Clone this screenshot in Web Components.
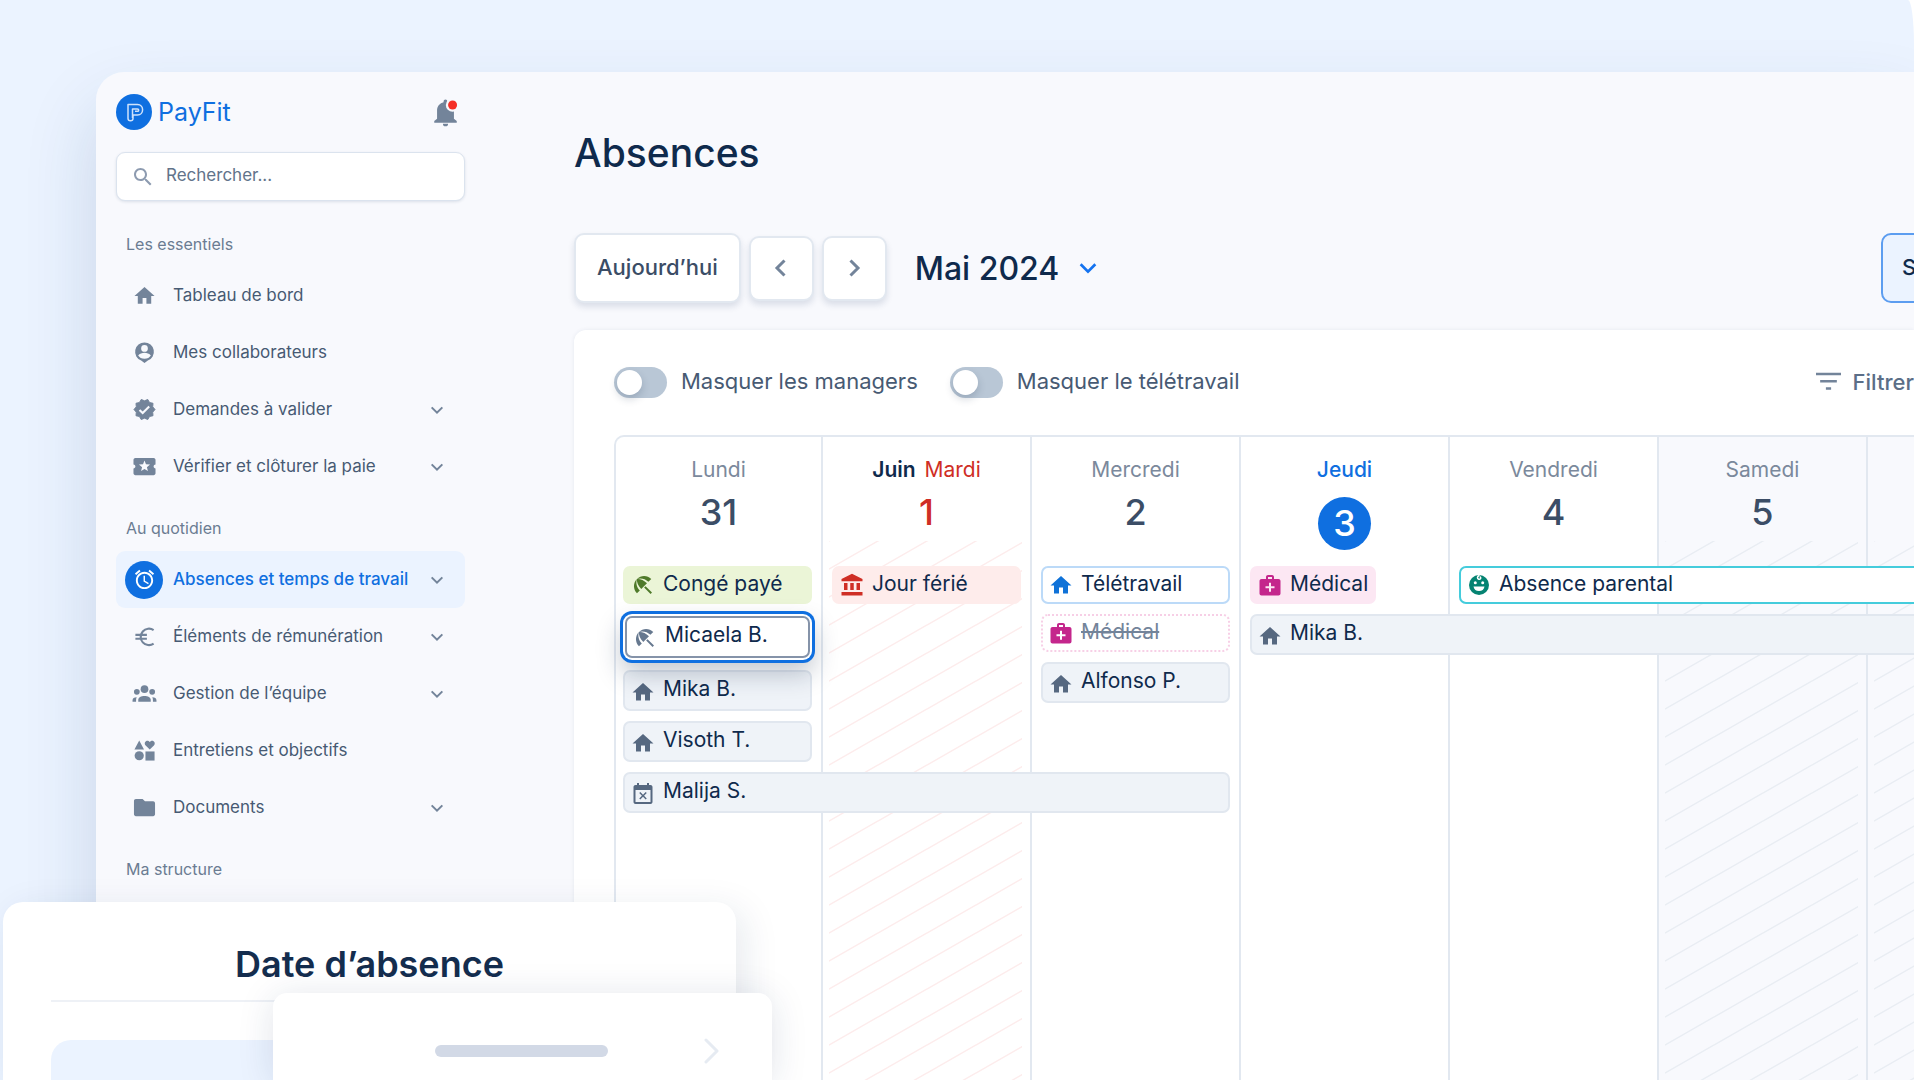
<!DOCTYPE html>
<html lang="fr">
<head>
<meta charset="utf-8">
<meta name="viewport" content="width=device-width, initial-scale=1">
<title>PayFit - Absences</title>
<style>
  :root {
    --blue: #0f6fe0;
    --blue-light: #ebf3ff;
    --navy: #0f2a4c;
    --slate: #3b4d66;
    --text: #475a73;
    --muted: #73849a;
    --line: #e2e8f0;
    --surface: #f8f9fd;
  }

  body {
    margin: 0;
    background: white;
    color: var(--navy);
    font-family: Inter, "Liberation Sans", sans-serif;
  }
</style>
</head>
<body>

<payfit-page>
  <side-bar slot="sidebar">
    <nav-section heading="Les essentiels">
      <nav-item icon="home">Tableau de bord</nav-item>
      <nav-item icon="person">Mes collaborateurs</nav-item>
      <nav-item icon="verified" expandable>Demandes à valider</nav-item>
      <nav-item icon="ticket" expandable>Vérifier et clôturer la paie</nav-item>
    </nav-section>
    <nav-section heading="Au quotidien">
      <nav-item icon="alarm" expandable active>Absences et temps de travail</nav-item>
      <nav-item icon="euro" expandable>Éléments de rémunération</nav-item>
      <nav-item icon="groups" expandable>Gestion de l’équipe</nav-item>
      <nav-item icon="shapes">Entretiens et objectifs</nav-item>
      <nav-item icon="folder" expandable>Documents</nav-item>
    </nav-section>
    <nav-section heading="Ma structure"></nav-section>
  </side-bar>

  <absence-view slot="main">
    <week-calendar>
      <week-day name="Lundi" number="31">
        <day-event kind="leave" icon="umbrella">Congé payé</day-event>
        <day-event kind="selected" icon="umbrella">Micaela B.</day-event>
        <day-event kind="person" icon="home">Mika B.</day-event>
        <day-event kind="person" icon="home">Visoth T.</day-event>
        <day-event kind="person" icon="busy" style="--span: 3">Malija S.</day-event>
      </week-day>
      <week-day name="Mardi" number="1" month="Juin" holiday striped>
        <day-event kind="holiday" icon="bank">Jour férié</day-event>
      </week-day>
      <week-day name="Mercredi" number="2">
        <day-event kind="remote" icon="home">Télétravail</day-event>
        <day-event kind="cancelled" icon="medical">Médical</day-event>
        <day-event kind="person" icon="home">Alfonso P.</day-event>
      </week-day>
      <week-day name="Jeudi" number="3" today>
        <day-event kind="medical" icon="medical">Médical</day-event>
        <day-event kind="person" icon="home" style="--span: 4">Mika B.</day-event>
      </week-day>
      <week-day name="Vendredi" number="4">
        <day-event kind="parental" icon="baby" style="--span: 3">Absence parental</day-event>
      </week-day>
      <week-day name="Samedi" number="5" weekend striped></week-day>
      <week-day weekend striped></week-day>
    </week-calendar>
  </absence-view>

  <date-dialog slot="dialog">Date d’absence</date-dialog>
</payfit-page>

<script>
const ICONS = {
  home: '<path d="M10 20.5v-6h4v6h5v-8h3.5L12 3 1.5 12.5H5v8z"/>',
  search: '<path d="M15.5 14h-.79l-.28-.27C15.41 12.59 16 11.11 16 9.5 16 5.91 13.09 3 9.5 3S3 5.91 3 9.5 5.91 16 9.5 16c1.61 0 3.09-.59 4.23-1.57l.27.28v.79l5 4.99L20.49 19l-4.99-5zm-6 0C7.01 14 5 11.99 5 9.5S7.01 5 9.5 5 14 7.01 14 9.5 11.99 14 9.5 14z"/>',
  person: '<path fill-rule="evenodd" d="M12 1.5a9.8 9.8 0 0 0-3.5 18.95L12 23l3.5-2.55A9.8 9.8 0 0 0 12 1.5zm0 2.7a3.5 3.5 0 1 1 0 7 3.5 3.5 0 0 1 0-7zm0 14.3c-2.9 0-5.3-1.3-6.6-3.4 1.2-1.9 4.4-2.8 6.6-2.8s5.4.9 6.6 2.8c-1.3 2.1-3.7 3.4-6.6 3.4z"/>',
  verified: '<path stroke="currentColor" stroke-linejoin="round" d="M23 12l-2.44-2.79.34-3.69-3.61-.82-1.89-3.2L12 2.96 8.6 1.5 6.71 4.69 3.1 5.5l.34 3.7L1 12l2.44 2.79-.34 3.7 3.61.82L8.6 22.5l3.4-1.47 3.4 1.46 1.89-3.19 3.61-.82-.34-3.69z"/><path d="M6.8 12.4l3.3 3.3 6.8-6.8" fill="none" stroke="#f8f9fd" stroke-width="2.2"/>',
  ticket: '<path d="M21.5 12c0-1.1.9-2 2-2V5c0-1.1-.9-2-2-2h-19c-1.100 0-2 .9-2 2v5c1.1 0 2 .9 2 2s-.9 2-2 2v5c0 1.100.9 2 2 2h19c1.1 0 2-.9 2-2v-5c-1.100 0-2-.9-2-2zm-5.920 4.800L12 14.500l-3.580 2.300 1.080-4.120-3.290-2.690 4.240-.25L12 5.800l1.540 3.950 4.240.25-3.290 2.690z"/>',
  alarm: '<path d="M22 5.72l-4.6-3.86-1.29 1.53 4.6 3.86zM7.88 3.39L6.6 1.86 2 5.71l1.29 1.53zM12.5 8H11v6l4.75 2.85.75-1.23-4-2.37zM12 4c-4.97 0-9 4.03-9 9s4.02 9 9 9c4.97 0 9-4.03 9-9s-4.03-9-9-9zm0 16c-3.87 0-7-3.13-7-7s3.13-7 7-7 7 3.13 7 7-3.13 7-7 7z"/>',
  euro: '<path d="M21.5 5.3A8.6 8.6 0 1 0 21.5 19.5M2.5 10.3h12M2.5 14.3h12" fill="none" stroke="currentColor" stroke-width="2.2"/>',
  groups: '<circle cx="12" cy="7.5" r="4"/><path d="M5.500 20.500v-1.700c0-2.600 3-4.100 6.500-4.100s6.500 1.500 6.500 4.100v1.700z"/><circle cx="4" cy="10.2" r="3"/><circle cx="20" cy="10.2" r="3"/><path d="M-.5 20.500v-1.300c0-2 1.600-3.200 4.400-3.200-.5.9-.7 1.800-.7 2.800v1.700zM24.500 20.500v-1.300c0-2-1.600-3.200-4.400-3.200.5.9.7 1.800.7 2.800v1.700z"/>',
  shapes: '<path d="M6.5 1.5l5 9.5h-10zM17.5 11l-4.3-4.2c-2.3-2.6.3-6 3.1-4.7l1.2.9 1.2-.9c2.8-1.3 5.4 2.1 3.1 4.700z"/><circle cx="6.5" cy="17.5" r="4.8"/><path d="M13 13h9.5v9.5H13z"/>',
  folder: '<path d="M10 3H3c-1.100 0-2 .9-2 2v14c0 1.100.9 2 2 2h18c1.100 0 2-.9 2-2V7.500c0-1.100-.9-2-2-2h-8.500z"/>',
  umbrella: '<path d="M13.13 14.56l1.43-1.43 6.44 6.44L19.57 21zM17.42 8.83l2.86-2.86c-3.95-3.95-10.35-3.96-14.3-.02 3.93-1.3 8.31-.25 11.44 2.88zM5.95 5.98c-3.94 3.95-3.93 10.35.02 14.3l2.86-2.86C5.7 14.29 4.65 9.91 5.95 5.98zM5.97 5.96l-.01.01c-.38 3.01 1.17 6.88 4.3 10.02l5.73-5.73c-3.13-3.13-7.01-4.68-10.02-4.3z"/>',
  bank: '<path d="M4 10v7h3.500v-7zm6.250 0v7h3.500v-7zM1.500 22.500h21v-3.500h-21zM16.500 10v7H20v-7zM12 .8L1.500 6v2.300h21V6z"/>',
  medical: '<path d="M20.500 6H16V4c0-1.100-.9-2-2-2h-4c-1.100 0-2 .9-2 2v2H3.500c-1.100 0-2 .9-2 2v12.500c0 1.100.9 2 2 2h17c1.100 0 2-.9 2-2V8c0-1.100-.9-2-2-2zM10 4h4v2h-4zm6.500 11.200H13v3.500h-2v-3.500H7.500v-2H11V9.700h2v3.500h3.500z"/>',
  busy: '<path d="M9.31 17.5l2.690-2.690 2.690 2.690 1.060-1.060-2.690-2.690 2.690-2.690L14.690 10 12 12.690 9.310 10l-1.060 1.060 2.690 2.690-2.690 2.690zM19.500 3H18V1h-2v2H8V1H6v2H4.500c-1.100 0-2 .9-2 2v15c0 1.100.9 2 2 2h15c1.100 0 2-.9 2-2V5c0-1.100-.9-2-2-2zm0 17h-15V8h15z"/>',
  baby: '<circle cx="12" cy="12" r="10"/><path d="M12 2.500c-2 1-2 3.300-.3 3.800 1.800.4 2.600-1.300 1.600-2.300" fill="none" stroke="white" stroke-width="1.5" stroke-linecap="round"/><circle cx="8.3" cy="9.8" r="1.5" fill="white"/><circle cx="15.7" cy="9.8" r="1.5" fill="white"/><path d="M6.5 13.5h11a5.6 5.6 0 0 1-11 0z" fill="white"/>',
  bell: '<path d="M12 .5c-1 0-1.700.7-1.700 1.700v.6C7 3.600 4.500 6.400 4.500 10v7.500L2 19.500v1.500h20v-1.500l-2.500-2V10c0-3.600-2.500-6.400-5.800-7.200v-.6c0-1-.7-1.700-1.700-1.700zM9.700 22a2.300 2.300 0 0 0 4.600 0z"/><circle cx="18.300" cy="5.300" r="6" fill="#f8f9fd"/><circle cx="18.300" cy="5.300" r="4" fill="#f52f26"/>',
  filter: '<path d="M0 3.5h24v2.500H0zM4 10.500h16V13H4zM9.500 17.500h5V20h-5z"/>',
  down: '<path d="M4 8l8 8 8-8" fill="none" stroke="currentColor" stroke-width="3"/>',
  left: '<path d="M15.5 4.5L8 12l7.5 7.5" fill="none" stroke="currentColor" stroke-width="3"/>',
  right: '<path d="M8.5 4.5L16 12l-7.5 7.5" fill="none" stroke="currentColor" stroke-width="3"/>',
};

function attach(element, html) {
  const template = document.createElement('template');
  template.innerHTML = html;
  element.attachShadow({ mode: 'open' }).appendChild(template.content.cloneNode(true));
}

class UiIcon extends HTMLElement {
  connectedCallback() {
    if (this.shadowRoot) return;
    attach(this, `
      <style>
        :host { display: inline-block; flex: none; width: 24px; height: 24px; }
        svg { display: block; width: 100%; height: 100%; fill: currentColor; overflow: visible; }
      </style>
      <svg viewBox="0 0 24 24" aria-hidden="true">${ICONS[this.getAttribute('name')]}</svg>
    `);
  }
}

class PayfitPage extends HTMLElement {
  connectedCallback() {
    attach(this, `
      <style>
        :host {
          display: flex;
          position: relative;
          box-sizing: border-box;
          height: 100vh;
          margin-right: 6px;
          padding: 72px 0 0 96px;
          overflow: hidden;
          background: var(--blue-light);
          border-top-right-radius: 6px 45px;
        }
        .window {
          flex: 1;
          min-width: 0;
          display: grid;
          grid-template-columns: 349px minmax(0, 1fr);
          gap: 109px;
          padding-left: 20px;
          background: var(--surface);
          border-top-left-radius: 28px;
          box-shadow: 0 36px 72px rgba(20, 60, 110, 0.16);
        }
      </style>
      <div class="window">
        <slot name="sidebar"></slot>
        <slot name="main"></slot>
      </div>
      <slot name="dialog"></slot>
    `);
  }
}

class SideBar extends HTMLElement {
  connectedCallback() {
    attach(this, `
      <style>
        :host { display: block; padding-top: 22px; }
        header { display: flex; align-items: center; justify-content: space-between; height: 36px; }
        .brand { display: flex; align-items: center; gap: 6px; color: var(--blue); font-size: 25px; text-decoration: none; }
        .brand svg { width: 36px; height: 36px; }
        .bell { display: flex; margin-right: 6px; padding: 0; border: 0; background: none; color: var(--muted); }
        .bell ui-icon { width: 27px; height: 27px; }
        .search {
          display: flex;
          align-items: center;
          gap: 11px;
          box-sizing: border-box;
          height: 49px;
          margin: 22px 0 10px;
          padding: 0 14px;
          border: 1px solid #dbe3ee;
          border-radius: 9px;
          background: white;
          box-shadow: 0 1px 3px rgba(20, 50, 90, 0.12);
          color: #8d9bb0;
        }
        input { flex: 1; min-width: 0; padding: 0 0 3px; border: 0; outline: 0; background: none; font: inherit; font-size: 17px; color: var(--text); }
        input::placeholder { color: #62738a; opacity: 1; }
      </style>
      <header>
        <a class="brand" href="#">
          <svg viewBox="0 0 36 36" aria-hidden="true">
            <circle cx="18" cy="18" r="18" fill="currentColor"/>
            <path d="M12 10.5h9.500c6.800 0 6.800 10.500 0 10.500H17v3.500c0 3-5 3-5 0zM16.500 24v-9h5c1.600 0 1.600 2.300 0 2.300h-2.500" fill="none" stroke="#cfe2fb" stroke-width="1.5" stroke-linejoin="round"/>
          </svg>
          PayFit
        </a>
        <button class="bell" type="button" aria-label="Notifications"><ui-icon name="bell"></ui-icon></button>
      </header>
      <label class="search">
        <ui-icon name="search"></ui-icon>
        <input type="search" placeholder="Rechercher..." aria-label="Rechercher">
      </label>
      <nav><slot></slot></nav>
    `);
  }
}

class NavSection extends HTMLElement {
  connectedCallback() {
    attach(this, `
      <style>
        :host { display: block; padding-top: 22px; }
        h2 { margin: 0 10px 12px; font-size: 16px; line-height: 22px; font-weight: 400; color: #6b7c92; }
      </style>
      <h2>${this.getAttribute('heading')}</h2>
      <slot></slot>
    `);
  }
}

class NavItem extends HTMLElement {
  connectedCallback() {
    const chevron = this.hasAttribute('expandable') ? '<ui-icon class="chevron" name="down"></ui-icon>' : '';
    attach(this, `
      <style>
        :host { display: block; }
        a {
          display: flex;
          align-items: center;
          gap: 10px;
          height: 57px;
          padding: 0 20px 0 9px;
          border-radius: 9px;
          color: var(--text);
          font-size: 17px;
          text-decoration: none;
        }
        .badge { display: grid; place-items: center; width: 38px; height: 38px; border-radius: 50%; color: var(--muted); }
        .badge ui-icon { width: 23px; height: 23px; }
        .label { flex: 1; padding-bottom: 2px; white-space: nowrap; }
        .chevron { width: 16px; height: 16px; color: var(--muted); }
        :host([active]) a { background: var(--blue-light); color: var(--blue); font-weight: 500; }
        :host([active]) .badge { background: var(--blue); color: white; }
      </style>
      <a href="#">
        <span class="badge"><ui-icon name="${this.getAttribute('icon')}"></ui-icon></span>
        <span class="label"><slot></slot></span>
        ${chevron}
      </a>
    `);
  }
}

class ToggleSwitch extends HTMLElement {
  connectedCallback() {
    attach(this, `
      <style>
        :host { display: block; }
        label { display: flex; align-items: center; gap: 14px; font-size: 22px; line-height: 28px; color: var(--text); white-space: nowrap; }
        span { padding-bottom: 3px; }
        input {
          appearance: none;
          display: flex;
          align-items: center;
          box-sizing: border-box;
          width: 53px;
          height: 31px;
          margin: 0;
          padding: 3px;
          border-radius: 16px;
          background: #b9c7d6;
        }
        input::before { content: ""; width: 25px; height: 25px; border-radius: 50%; background: white; box-shadow: 0 4px 8px rgba(20, 40, 70, 0.2); }
        input:checked { justify-content: flex-end; background: var(--blue); }
      </style>
      <label><input type="checkbox" role="switch"><span><slot></slot></span></label>
    `);
  }
}

class AbsenceView extends HTMLElement {
  connectedCallback() {
    attach(this, `
      <style>
        :host { display: flex; flex-direction: column; min-width: 0; padding-top: 57px; }
        h1 { margin: 0 0 56px; font-size: 39px; line-height: 48px; font-weight: 500; }
        button { font: inherit; color: inherit; background: none; border: 0; padding: 0; white-space: nowrap; }
        .toolbar { display: flex; align-items: center; gap: 8px; height: 70px; margin-bottom: 27px; }
        .today, .arrow, .scope { box-sizing: border-box; border: 2px solid var(--line); border-radius: 10px; }
        .today, .arrow { background: white; box-shadow: 0 4px 6px rgba(20, 50, 90, 0.13); }
        .today { height: 70px; padding: 0 21px 3px; font-size: 22px; font-weight: 500; color: var(--slate); }
        .arrow { display: grid; place-items: center; width: 65px; height: 65px; color: var(--muted); }
        .month { display: flex; align-items: center; gap: 18px; margin-left: 20px; font-size: 32px; font-weight: 500; }
        .month ui-icon { width: 22px; height: 22px; color: #1473f0; }
        .scope {
          flex: none;
          width: 164px;
          height: 70px;
          margin: 0 -131px 0 auto;
          padding: 0 0 3px 19px;
          border-color: #5c9df0;
          background: var(--blue-light);
          font-size: 22px;
          font-weight: 500;
          text-align: left;
        }
        .panel {
          flex: 1;
          display: flex;
          flex-direction: column;
          min-height: 0;
          padding: 37px 0 0 40px;
          border-top-left-radius: 12px;
          background: white;
          box-shadow: 0 0 4px rgba(20, 50, 90, 0.08);
        }
        .options { display: flex; align-items: center; gap: 32px; margin-bottom: 37px; }
        .filter { display: flex; align-items: center; gap: 12px; margin-left: auto; padding-bottom: 2px; font-size: 22px; line-height: 28px; font-weight: 500; color: #5b6e87; }
        .filter ui-icon { width: 25px; height: 25px; color: var(--muted); }
      </style>
      <h1>Absences</h1>
      <div class="toolbar">
        <button class="today" type="button">Aujourd’hui</button>
        <button class="arrow" type="button" aria-label="Semaine précédente"><ui-icon name="left"></ui-icon></button>
        <button class="arrow" type="button" aria-label="Semaine suivante"><ui-icon name="right"></ui-icon></button>
        <button class="month" type="button">Mai 2024 <ui-icon name="down"></ui-icon></button>
        <button class="scope" type="button">S</button>
      </div>
      <section class="panel">
        <div class="options">
          <toggle-switch>Masquer les managers</toggle-switch>
          <toggle-switch>Masquer le télétravail</toggle-switch>
          <button class="filter" type="button"><ui-icon name="filter"></ui-icon>Filtrer</button>
        </div>
        <slot></slot>
      </section>
    `);
  }
}

class WeekCalendar extends HTMLElement {
  connectedCallback() {
    attach(this, `
      <style>
        :host {
          flex: 1;
          display: grid;
          grid-template-columns: minmax(207px, 1fr) repeat(6, minmax(209px, 1fr));
          border: solid var(--line);
          border-width: 2px 0 0 2px;
          border-top-left-radius: 10px;
        }
      </style>
      <slot></slot>
    `);
  }
}

class WeekDay extends HTMLElement {
  connectedCallback() {
    const month = this.getAttribute('month');
    const name = this.getAttribute('name');
    const header = name
      ? `<div class="name">${month ? `<b>${month}</b> ` : ''}${name}</div><div class="number">${this.getAttribute('number')}</div>`
      : '';
    const stripes = this.hasAttribute('striped')
      ? `<svg class="stripes" aria-hidden="true">
          <pattern id="stripe" width="49" height="28" patternUnits="userSpaceOnUse">
            <path d="M-49 56L98 -28M-49 28L49 -28M0 56L98 0" stroke="currentColor" stroke-width="1.5"/>
          </pattern>
          <rect width="100%" height="100%" fill="url(#stripe)"/>
        </svg>`
      : '';
    attach(this, `
      <style>
        :host { display: grid; grid-template-rows: 104px 1fr; grid-template-columns: minmax(0, 1fr); border-right: 2px solid var(--line); --stripe: #fdecec; }
        header { display: flex; flex-direction: column; align-items: center; padding-top: 19px; }
        .name { margin-bottom: 13px; font-size: 21px; line-height: 28px; color: #7b899c; }
        .name b { margin-right: 3px; font-weight: 600; color: var(--navy); }
        .number { font-size: 36px; line-height: 30px; font-weight: 500; color: var(--slate); }
        .events { grid-area: 2 / 1; display: flex; flex-direction: column; align-items: flex-start; gap: 10px; padding: 25px 9px 0; }
        .stripes { grid-area: 2 / 1; width: calc(100% - 14px); height: 100%; margin-left: 6px; color: var(--stripe); }
        :host(:first-child) .events { padding-left: 7px; }
        :host([holiday]) .name, :host([holiday]) .number { color: #cf2e25; }
        :host([weekend]) { background: var(--surface); --stripe: #e9edf3; }
        :host([today]) .name { color: var(--blue); font-weight: 500; }
        :host([today]) .number { width: 53px; line-height: 53px; border-radius: 50%; background: var(--blue); color: white; text-align: center; }
      </style>
      <header>${header}</header>
      ${stripes}
      <div class="events"><slot></slot></div>
    `);
  }
}

class DayEvent extends HTMLElement {
  connectedCallback() {
    attach(this, `
      <style>
        :host {
          --span: 1;
          position: relative;
          z-index: 1;
          display: flex;
          align-items: center;
          gap: 8px;
          box-sizing: border-box;
          width: calc(var(--span) * 100% + (var(--span) - 1) * 20px);
          height: 38px;
          padding-left: 6px;
          border: 2px solid transparent;
          border-radius: 7px;
          font-size: 21px;
          line-height: 28px;
          white-space: nowrap;
        }
        span { padding-bottom: 2px; }
        :host([kind="leave"]) { background: #ebf5d7; }
        :host([kind="leave"]) ui-icon { color: #4f7a2a; }
        :host([kind="holiday"]) { background: #feeceb; }
        :host([kind="holiday"]) ui-icon { color: #cf2e25; }
        :host([kind="medical"]) { width: auto; padding-right: 6px; background: #fce7f3; }
        :host([kind="medical"]) ui-icon, :host([kind="cancelled"]) ui-icon { color: #c4268c; }
        :host([kind="remote"]) { background: white; border-color: #bcdaf8; }
        :host([kind="remote"]) ui-icon { color: #0f72d8; }
        :host([kind="cancelled"]) { background: white; border: 2px dotted #f7cfe6; }
        :host([kind="cancelled"]) span { color: #73849a; text-decoration: line-through; }
        :host([kind="parental"]) { background: white; border-color: #45ccdc; }
        :host([kind="parental"]) ui-icon { color: #058372; }
        :host([kind="person"]) { height: 41px; background: #eff3f8; border-color: #e1e7ef; }
        :host([kind="person"]) ui-icon { margin-top: 2px; color: #566880; }
        :host([kind="person"]) span { padding-bottom: 4px; }
        :host([kind="selected"]) {
          z-index: 2;
          width: calc(100% - 4px);
          height: 42px;
          margin: 2px;
          border-color: #8593a9;
          background: white;
          box-shadow: 0 0 0 2px white, 0 0 0 5px var(--blue), 0 12px 24px 4px rgba(20, 40, 70, 0.25);
        }
        :host([kind="selected"]) ui-icon { margin-top: 2px; color: #66788f; }
        :host([kind="selected"]) span { padding-bottom: 5px; }
      </style>
      <ui-icon name="${this.getAttribute('icon')}"></ui-icon>
      <span><slot></slot></span>
    `);
  }
}

class DateDialog extends HTMLElement {
  connectedCallback() {
    attach(this, `
      <style>
        :host {
          position: absolute;
          z-index: 3;
          left: 3px;
          bottom: 0;
          box-sizing: border-box;
          width: 733px;
          padding: 38px 48px 0;
          border-radius: 20px 20px 0 0;
          background: white;
          box-shadow: 8px 8px 36px rgba(20, 50, 90, 0.1);
        }
        h2 { margin: 0; padding-bottom: 12px; border-bottom: 2px solid #eef1f6; font-size: 36px; line-height: 48px; font-weight: 600; text-align: center; color: #142d4e; }
        .field { height: 40px; margin-top: 38px; border-radius: 20px 20px 0 0; background: var(--blue-light); }
        .picker {
          position: absolute;
          left: 270px;
          bottom: 0;
          box-sizing: border-box;
          display: flex;
          align-items: flex-start;
          justify-content: flex-end;
          gap: 90px;
          width: 499px;
          height: 87px;
          padding: 45px 50px 0 0;
          border-radius: 14px 14px 0 0;
          background: white;
          box-shadow: 0 4px 36px rgba(20, 50, 90, 0.13);
        }
        .bar { width: 173px; height: 12px; margin-top: 7px; border-radius: 6px; background: #d2d9e6; }
        svg { width: 24px; height: 26px; fill: none; stroke: #e6ebf2; stroke-width: 3; stroke-linecap: round; stroke-linejoin: round; }
      </style>
      <h2><slot></slot></h2>
      <div class="field"></div>
      <div class="picker">
        <div class="bar"></div>
        <svg viewBox="0 0 24 26" aria-hidden="true"><path d="M8 2l11 11L8 24"/></svg>
      </div>
    `);
  }
}

customElements.define('ui-icon', UiIcon);
customElements.define('payfit-page', PayfitPage);
customElements.define('side-bar', SideBar);
customElements.define('nav-section', NavSection);
customElements.define('nav-item', NavItem);
customElements.define('toggle-switch', ToggleSwitch);
customElements.define('absence-view', AbsenceView);
customElements.define('week-calendar', WeekCalendar);
customElements.define('week-day', WeekDay);
customElements.define('day-event', DayEvent);
customElements.define('date-dialog', DateDialog);
</script>
</body>
</html>
